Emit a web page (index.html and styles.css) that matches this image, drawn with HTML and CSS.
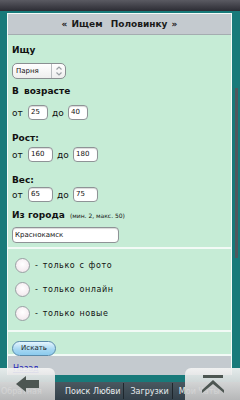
FILE: index.html
```html
<!DOCTYPE html>
<html>
<head>
<meta charset="utf-8">
<link rel="stylesheet" href="styles.css">
</head>
<body>
<div class="topbar"></div>
<div class="page">
  <div class="box">
    <div class="header">« Ищем&nbsp; Половинку »</div>
    <div class="form">
      <div class="label l-first">Ищу</div>
      <div class="select">
        <span class="select-text">Парня</span>
        <span class="spin">
          <svg width="8" height="12" viewBox="0 0 8 12"><path d="M1.5 4.5 L4 2 L6.5 4.5 M1.5 7.5 L4 10 L6.5 7.5" fill="none" stroke="#9aa0a4" stroke-width="1.2"/></svg>
        </span>
      </div>
      <div class="label l-age">В возрасте</div>
      <div class="range r-age">
        <span class="ot">от</span><span class="inp w20">25</span><span class="do">до</span><span class="inp w20">40</span>
      </div>
      <div class="label l-height">Рост:</div>
      <div class="range r-height">
        <span class="ot">от</span><span class="inp w25">160</span><span class="do">до</span><span class="inp w25">180</span>
      </div>
      <div class="label l-weight">Вес:</div>
      <div class="range r-weight">
        <span class="ot">от</span><span class="inp w25">65</span><span class="do">до</span><span class="inp w25">75</span>
      </div>
      <div class="label l-city">Из города <span class="hint">(мин. 2, макс. 50)</span></div>
      <div class="inp city">Краснокамск</div>
    </div>
    <div class="divider"></div>
    <div class="checks">
      <div class="check"><span class="circle"></span><span class="ctext">- только с фото</span></div>
      <div class="check"><span class="circle"></span><span class="ctext">- только онлайн</span></div>
      <div class="check"><span class="circle"></span><span class="ctext">- только новые</span></div>
    </div>
    <div class="divider"></div>
    <div class="actions"><span class="btn">Искать</span></div>
    <div class="divider"></div>
    <div class="footer"><a class="back-link" href="#">Назад</a></div>
  </div>
</div>
<div class="scroll"></div>
<div class="toolbar">
  <span class="tb-item tb-first">Обратная</span>
  <span class="tb-item tb-search">Поиск Любви</span><span class="sep"></span>
  <span class="tb-item tb-dl">Загрузки</span><span class="sep"></span>
  <span class="tb-item tb-dl">Мои Чаты</span>
</div>
<div class="nav-btn nav-left">
  <svg width="24" height="16" viewBox="0 0 24 16"><path d="M0 8 L10 0 L10 4 L23 4 L23 12 L10 12 L10 16 Z" fill="#4d5652"/></svg>
</div>
<div class="nav-btn nav-right">
  <svg width="22" height="18" viewBox="0 0 22 18"><rect x="1" y="0" width="20" height="3" fill="#4d5652"/><path d="M0 15 L11 5 L22 15 L22 18 L11 9 L0 18 Z" fill="#4d5652"/></svg>
</div>
</body>
</html>
```
FILE: styles.css
```css
html, body {
  margin: 0;
  padding: 0;
}
body {
  width: 240px;
  height: 400px;
  overflow: hidden;
  background: #187a7a;
  font-family: "DejaVu Sans", Verdana, sans-serif;
  color: #111;
  position: relative;
}
.topbar {
  height: 11px;
  background: linear-gradient(#5a5a62, #2c2c34);
}
.page {
  padding: 2px 8px 0 7px;
}
.box {
  border: 1px solid #f4fbf8;
  border-bottom: none;
  background: #c6ecd6;
}
.header {
  height: 20px;
  line-height: 20px;
  background: #c4cacf;
  border-bottom: 1px solid #a4acb0;
  text-align: center;
  font-weight: bold;
  font-size: 9px;
  word-spacing: 1px;
  color: #1a1a1a;
}
.form {
  padding: 10px 4px 4px;
}
.label {
  font-size: 9px;
  font-weight: bold;
  line-height: 11px;
  word-spacing: 2px;
}
.l-age { margin-top: 7px; }
.l-height { margin-top: 13px; }
.l-weight { margin-top: 13px; }
.l-city { margin-top: 8px; word-spacing: 0; }
.hint {
  font-size: 6px;
  font-weight: normal;
  margin-left: 2px;
}
.select {
  margin-top: 7px;
  width: 52px;
  height: 14px;
  border: 1px solid #8a8f92;
  border-radius: 5px;
  background: linear-gradient(#ffffff, #eeeeee);
  display: flex;
  align-items: center;
  font-size: 7px;
}
.select-text {
  flex: 1;
  padding-left: 3px;
}
.spin {
  width: 13px;
  height: 14px;
  border-left: 1px solid #b8bcbf;
  display: flex;
  align-items: center;
  justify-content: center;
}
.range {
  display: flex;
  align-items: center;
  height: 15px;
  font-size: 9px;
}
.r-age { margin-top: 8px; }
.r-height { margin-top: 3px; }
.r-weight { margin-top: 1px; }
.ot { width: 16px; }
.do { width: 16px; margin-left: 4px; }
.inp {
  box-sizing: border-box;
  height: 15px;
  line-height: 13px;
  border: 1px solid #8e9396;
  border-radius: 4px;
  background: #fff;
  box-shadow: inset 0 1px 1px rgba(0,0,0,0.15);
  font-size: 7px;
  padding-left: 2px;
}
.w20 { width: 20px; }
.w25 { width: 25px; }
.city {
  margin-top: 6px;
  width: 107px;
  height: 16px;
  line-height: 14px;
}
.divider {
  height: 2px;
  background: #f2faf6;
}
.checks {
  padding: 9px 0 9px 7px;
  display: flex;
  flex-direction: column;
  gap: 9px;
}
.check {
  display: flex;
  align-items: center;
  height: 15px;
}
.circle {
  box-sizing: border-box;
  width: 15px;
  height: 15px;
  border-radius: 50%;
  border: 1px solid #9aa0a4;
  background: radial-gradient(circle at 50% 40%, #fff 0%, #f6eef2 60%, #e4dfe2 100%);
}
.ctext {
  margin-left: 5px;
  font-size: 8px;
  letter-spacing: 0.6px;
  word-spacing: 1px;
}
.actions {
  padding: 3px 4px 4px;
  height: 15px;
}
.btn {
  box-sizing: border-box;
  display: inline-block;
  width: 44px;
  height: 15px;
  line-height: 13px;
  text-align: center;
  border: 1px solid #5a8bab;
  border-radius: 8px;
  background: linear-gradient(#e6f6ff, #a8d8f2 55%, #8ccbee);
  font-size: 7px;
  color: #222;
}
.footer {
  background: #c4cacf;
  height: 19px;
  padding-left: 5px;
}
.back-link {
  font-size: 8px;
  color: #2424b8;
  text-decoration: underline;
  line-height: 12px;
}
.scroll {
  position: absolute;
  left: 235px;
  top: 88px;
  width: 3px;
  height: 170px;
  background: #50585e;
}
.toolbar {
  position: absolute;
  left: 0;
  right: 0;
  bottom: 0;
  height: 18px;
  background: linear-gradient(#4a5860, #33404a);
  display: flex;
  align-items: center;
  font-size: 8px;
  color: #e8ecef;
  white-space: nowrap;
}
.tb-item { padding: 0 3px; }
.tb-first { width: 52px; padding-left: 1px; }
.tb-search { padding-left: 9px; }
.tb-dl { padding-left: 6px; }
.sep {
  width: 1px;
  height: 16px;
  background: #1e262c;
}
.nav-btn {
  position: absolute;
  bottom: 0;
  width: 55px;
  height: 32px;
  background: linear-gradient(rgba(244,244,244,0.93), rgba(196,196,196,0.9));
  display: flex;
  align-items: center;
  justify-content: center;
}
.nav-left {
  left: 0;
  border-top-right-radius: 6px;
}
.nav-right {
  right: 0;
  border-top-left-radius: 6px;
}
```
